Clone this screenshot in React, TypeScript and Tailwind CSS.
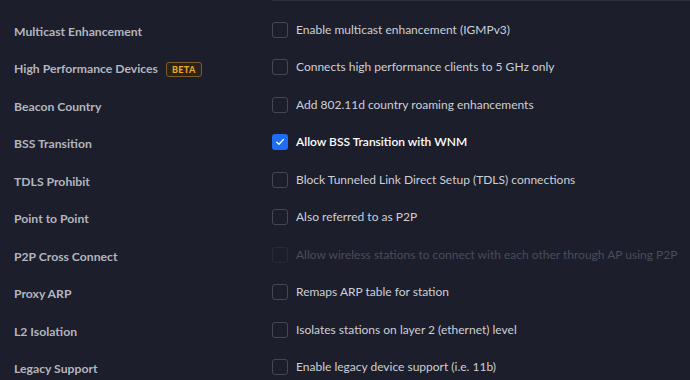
import React from 'react';

type Row = {
  label: string;
  text: string;
  checked?: boolean;
  disabled?: boolean;
  beta?: boolean;
};

const rows: Row[] = [
  { label: 'Multicast Enhancement', text: 'Enable multicast enhancement (IGMPv3)' },
  { label: 'High Performance Devices', text: 'Connects high performance clients to 5 GHz only', beta: true },
  { label: 'Beacon Country', text: 'Add 802.11d country roaming enhancements' },
  { label: 'BSS Transition', text: 'Allow BSS Transition with WNM', checked: true },
  { label: 'TDLS Prohibit', text: 'Block Tunneled Link Direct Setup (TDLS) connections' },
  { label: 'Point to Point', text: 'Also referred to as P2P' },
  { label: 'P2P Cross Connect', text: 'Allow wireless stations to connect with each other through AP using P2P', disabled: true },
  { label: 'Proxy ARP', text: 'Remaps ARP table for station' },
  { label: 'L2 Isolation', text: 'Isolates stations on layer 2 (ethernet) level' },
  { label: 'Legacy Support', text: 'Enable legacy device support (i.e. 11b)' },
];

const Checkbox: React.FC<{ checked?: boolean; disabled?: boolean }> = ({ checked, disabled }) => {
  if (checked) {
    return (
      <div className="w-4 h-4 rounded-[3px] bg-[#1d6ef5] flex items-center justify-center shrink-0">
        <svg width="10" height="10" viewBox="0 0 10 10" fill="none">
          <path d="M1.8 5.2 L4 7.3 L8.3 2.6" stroke="white" strokeWidth="1.4" strokeLinecap="round" strokeLinejoin="round" />
        </svg>
      </div>
    );
  }
  return (
    <div
      className={`w-4 h-4 rounded-[3px] border shrink-0 ${
        disabled ? 'border-[#272a37]' : 'border-[#454854]'
      }`}
    />
  );
};

export default function App() {
  return (
    <div
      className="w-[690px] h-[380px] overflow-hidden bg-[#1c1e2c] relative"
      style={{ fontFamily: 'Lato, "Noto Sans", sans-serif' }}
    >
      <div className="ml-[272px] border-t border-[#2b2e3b]" />
      <div className="flex flex-col pt-[10px]">
        {rows.map((r) => (
          <div key={r.label} className="flex items-center h-[37.5px]">
            <div className="w-[272px] pl-[14px] pt-[4px] flex items-center gap-[8px] shrink-0">
              <span className="text-[12.2px] font-bold text-[#b3b6bf] whitespace-nowrap">{r.label}</span>
              {r.beta && (
                <span className="border border-[#7d5e26] bg-[#28241c] rounded-[3px] px-[5px] h-[15px] flex items-center text-[9px] font-black tracking-[0.4px] text-[#f5a524] leading-none">
                  BETA
                </span>
              )}
            </div>
            <div className="flex items-center gap-[8px]">
              <Checkbox checked={r.checked} disabled={r.disabled} />
              <span
                className={`text-[12px] whitespace-nowrap ${
                  r.checked
                    ? 'text-white font-semibold'
                    : r.disabled
                    ? 'text-[#4a4d5a]'
                    : 'text-[#cdd0d6]'
                }`}
              >
                {r.text}
              </span>
            </div>
          </div>
        ))}
      </div>
    </div>
  );
}
